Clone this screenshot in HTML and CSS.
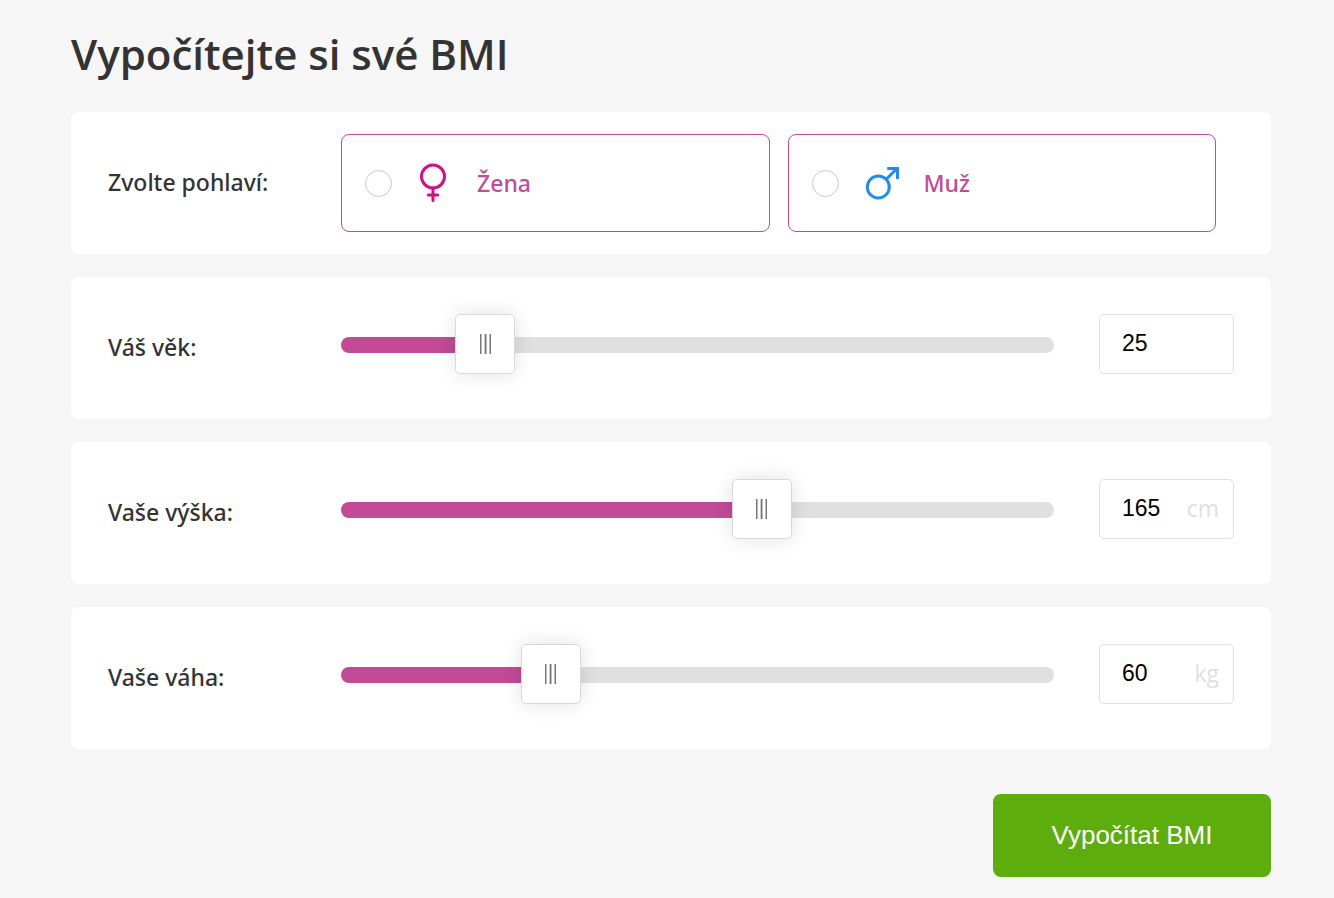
FILE: index.html
```
<!DOCTYPE html>
<html lang="cs">
<head>
  <meta charset="UTF-8">
  <meta name="viewport" content="width=device-width, initial-scale=1.0">
  <title>BMI kalkulačka</title>
  <link rel="stylesheet" href="styles.css">
</head>
<body>
  <h1>Vypočítejte si své BMI</h1>

  <form id="bmiForm">
    <div class="row row-gender" role="radiogroup" aria-labelledby="genderLabel">
      <span class="row-label" id="genderLabel">Zvolte pohlaví:</span>
      <div class="genders">
        <label class="gender">
          <input type="radio" name="gender" value="female">
          <svg class="gender-icon" viewBox="0 0 40 40" fill="none" stroke="#d10f8c" stroke-width="3">
            <circle cx="20" cy="13.500" r="11.500"/>
            <path d="M20 25V37.500M15.300 32H24.700" stroke-linecap="round"/>
          </svg>
          <span>Žena</span>
        </label>
        <label class="gender">
          <input type="radio" name="gender" value="male">
          <svg class="gender-icon" viewBox="0 0 40 40" fill="none" stroke="#1f8cf5" stroke-width="3">
            <circle cx="18.300" cy="24" r="11"/>
            <path d="M26.200 16.200L37 5.500M27.200 5.500H37.500V16"/>
          </svg>
          <span>Muž</span>
        </label>
      </div>
    </div>

    <div class="row">
      <label class="row-label" for="age">Váš věk:</label>
      <div class="controls">
        <input type="range" id="ageRange" min="18" max="58" value="25" aria-label="Váš věk">
        <div class="value">
          <input type="text" id="age" inputmode="numeric" value="25">
        </div>
      </div>
    </div>

    <div class="row">
      <label class="row-label" for="height">Vaše výška:</label>
      <div class="controls">
        <input type="range" id="heightRange" min="98" max="210" value="165" aria-label="Vaše výška">
        <div class="value">
          <input type="text" id="height" inputmode="numeric" value="165">
          <span class="unit">cm</span>
        </div>
      </div>
    </div>

    <div class="row">
      <label class="row-label" for="weight">Vaše váha:</label>
      <div class="controls">
        <input type="range" id="weightRange" min="22" max="160" value="60" aria-label="Vaše váha">
        <div class="value">
          <input type="text" id="weight" inputmode="numeric" value="60">
          <span class="unit">kg</span>
        </div>
      </div>
    </div>

    <button type="submit">Vypočítat BMI</button>
  </form>

  <script>
    // barevná část posuvníku
    function updateFill(range) {
      const percent = (range.value - range.min) / (range.max - range.min) * 100;
      range.style.setProperty('--fill', percent + '%');
    }

    ['age', 'height', 'weight'].forEach(function(id) {
      const input = document.getElementById(id);
      const range = document.getElementById(id + 'Range');

      range.addEventListener('input', function() {
        input.value = range.value;
        updateFill(range);
      });
      input.addEventListener('input', function() {
        range.value = input.value;
        updateFill(range);
      });
      updateFill(range);
    });

    document.getElementById('bmiForm').addEventListener('submit', function(e) {
      e.preventDefault();
    });
  </script>
</body>
</html>
```
FILE: styles.css
```
* {
  box-sizing: border-box;
}
body {
  margin: 0;
  padding: 24px 63px 20px 71px;
  background-color: #f6f6f6;
  color: #333;
  font-family: 'Noto Sans', 'Open Sans', sans-serif;
  font-size: 23px;
  font-weight: 500;
  line-height: 32px;
}
h1 {
  margin: 0 0 28px;
  font-family: 'Open Sans', 'Noto Sans', sans-serif;
  font-size: 42px;
  font-weight: 600;
  line-height: 60px;
}
form {
  display: flex;
  flex-direction: column;
}
.row {
  display: flex;
  align-items: center;
  min-height: 142px;
  margin-bottom: 23px;
  padding: 0 37px;
  border-radius: 8px;
  background-color: #fff;
}
.row-label {
  flex: 0 0 233px;
  padding-bottom: 2px;
}
.genders {
  flex: 1;
  display: grid;
  grid-template-columns: 1fr 1fr;
  gap: 18px;
  margin-right: 18px;
}
.gender {
  display: flex;
  align-items: center;
  height: 98px;
  padding: 0 23px;
  border: 1px solid #c24a97;
  border-radius: 8px;
  color: #c24a97;
  cursor: pointer;
}
.gender input {
  appearance: none;
  width: 27px;
  height: 27px;
  margin: 0;
  border: 1px solid #c8c8c8;
  border-radius: 50%;
}
.gender input:checked {
  border: 8px solid #c24a97;
}
.gender-icon {
  width: 40px;
  height: 40px;
  margin: 0 24px 0 21px;
}
.controls {
  flex: 1;
  display: flex;
  align-items: flex-start;
  gap: 45px;
  margin-bottom: 8px;
  height: 60px;
}
input[type="range"] {
  appearance: none;
  flex: 1;
  min-width: 0;
  height: 62px;
  margin: 0;
  background: none;
}
input[type="range"]::-webkit-slider-runnable-track {
  height: 16px;
  border-radius: 8px;
  background: linear-gradient(90deg, #c24a97 var(--fill), #e0e0e0 var(--fill));
}
input[type="range"]::-webkit-slider-thumb {
  appearance: none;
  width: 60px;
  height: 60px;
  margin-top: -23px;
  border: 1px solid #d8d8db;
  border-radius: 5px;
  background: linear-gradient(90deg, #777 1px, #bbb 1px 2px, #fff 2px 4px, #ccc 4px 5px, #777 5px 6px, #bbb 6px 7px, #fff 7px 9px, #bbb 9px 10px, #777 10px) center / 11px 20px no-repeat #fff;
  box-shadow: 0 0 20px rgba(0, 0, 0, 0.12);
  cursor: pointer;
}
.value {
  display: flex;
  align-items: center;
  width: 135px;
  height: 60px;
  padding: 0 14px 0 22px;
  border: 1px solid #e0e0e0;
  border-radius: 5px;
}
.value input {
  flex: 1;
  min-width: 0;
  height: 56px;
  padding: 0 0 2px;
  border: none;
  outline: none;
  background: none;
  color: #000;
  font-family: 'Liberation Sans', Arial, sans-serif;
  font-size: 23px;
}
.unit {
  padding-bottom: 2px;
  color: #e0e0e0;
  font-family: 'Open Sans', 'Noto Sans', sans-serif;
  font-weight: 400;
}
button {
  align-self: flex-end;
  width: 278px;
  height: 83px;
  margin-top: 22px;
  border: none;
  border-radius: 8px;
  background-color: #5dae0d;
  color: #fff;
  font-family: 'Liberation Sans', Arial, sans-serif;
  font-size: 26px;
  cursor: pointer;
}
button:hover {
  background-color: #529b0b;
}
```
